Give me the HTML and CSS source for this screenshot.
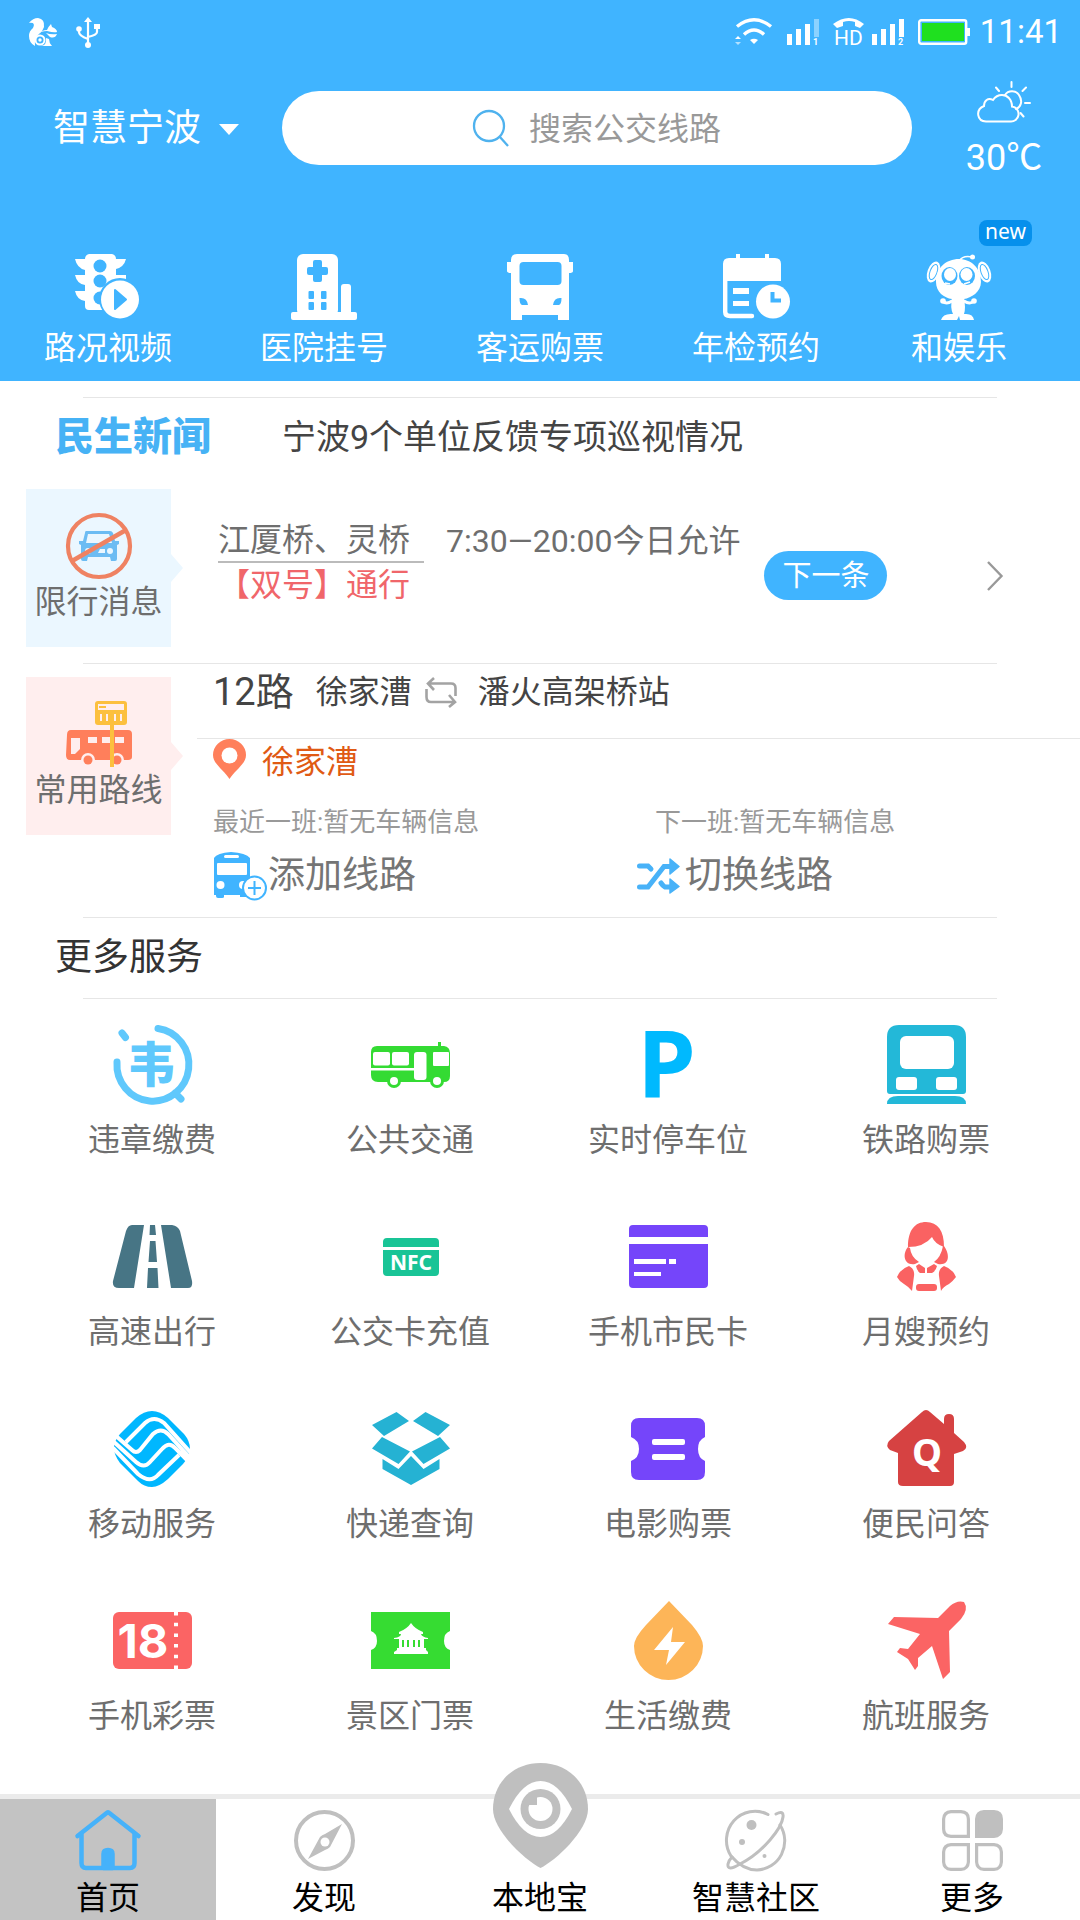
FILE: index.html
```html
<!DOCTYPE html>
<html lang="zh-CN">
<head>
    <meta charset="UTF-8">
    <meta name="viewport" content="width=device-width, initial-scale=1.0">
    <title>智慧宁波</title>
    <link rel="stylesheet" href="styles.css">
</head>
<body>
    <header class="header">
        <div class="status">
            <svg width="29" height="29" viewBox="0 0 29 29" fill="#fff">
                <path d="M0 5Q4 0 9 0Q16 1 15 9Q14 13 10 16Q5 20 6 28Q0 25 0 18Q0 13 4 10Q7 4 0 5z"/>
                <path d="M9 16Q13 12 18 12Q19 9 22 6L23 9Q28 11 28 14Q25 15 18 13Q12 13 9 16z"/>
                <path d="M17 15Q22 17 28 16Q26 21 21 19Q19 17 17 15zM17 20L20 21Q20 25 23 28H12Q18 27 17 20z"/>
                <circle cx="11" cy="22" r="4.500" fill="none" stroke="#fff" stroke-width="2"/>
                <circle cx="11" cy="22" r="1.700"/>
            </svg>
            <svg width="24" height="31" viewBox="0 0 24 31" fill="#fff">
                <path d="M12 4V27M3 12V15Q3 19 12 22M21 10V15Q21 18 12 20" fill="none" stroke="#fff" stroke-width="2.200"/>
                <path d="M8 5L12 0L16 5zM18 7H24V12H18z"/>
                <circle cx="3" cy="12" r="2.800"/>
                <circle cx="12" cy="28" r="3"/>
            </svg>
            <div class="status-right">
                <svg width="38" height="28" viewBox="0 0 38 28" fill="#fff">
                    <path d="M2 8.500Q19 -5 36 8.500M9 16.500Q19 7.500 29 16.500" fill="none" stroke="#fff" stroke-width="3.400"/>
                    <path d="M15 22Q19 19.500 23 22L19 26zM0 21L3 18L6 21z"/>
                    <path d="M0 24H6L3 27z" opacity=".6"/>
                </svg>
                <svg width="32" height="27" viewBox="0 0 32 27" fill="#fff">
                    <path d="M0 15H5V26H0zM9 10H14V26H9zM18 5H23V26H18z"/>
                    <path d="M27 0H32V18H27z" opacity=".4"/>
                    <text x="26" y="26" class="sim">1</text>
                </svg>
                <svg class="call" width="32" height="28" viewBox="0 0 32 28" fill="#fff">
                    <path d="M0 6Q16 -6 31 6L27 10L22 8V4Q16 2 10 4V8L4 10z"/>
                    <text x="1" y="27" class="hd">HD</text>
                </svg>
                <svg width="32" height="27" viewBox="0 0 32 27" fill="#fff">
                    <path d="M0 15H5V26H0zM9 10H14V26H9zM18 5H23V26H18zM27 0H32V18H27z"/>
                    <text x="26" y="26" class="sim">2</text>
                </svg>
                <svg width="52" height="26" viewBox="0 0 52 26">
                    <rect x="1.200" y="1.200" width="47" height="23.600" rx="2" fill="none" stroke="#fff" stroke-width="2.400"/>
                    <rect x="4" y="4" width="42" height="18" fill="#1fe01f"/>
                    <path d="M49 9H52V17H49z" fill="#fff"/>
                </svg>
                <span class="clock">11:41</span>
            </div>
        </div>

        <div class="topbar">
            <button class="city">智慧宁波
                <svg width="20" height="11" viewBox="0 0 20 11"><path d="M0 0H20L10 11z" fill="#fff"/></svg>
            </button>
            <label class="search">
                <svg width="36" height="38" viewBox="0 0 36 38" fill="none" stroke="#4fb2ee" stroke-width="2.300">
                    <circle cx="16" cy="17" r="15"/>
                    <path d="M26.500 27.500L35 37"/>
                </svg>
                <input type="text" placeholder="搜索公交线路" aria-label="搜索公交线路">
            </label>
            <a href="#" class="weather">
                <svg width="54" height="42" viewBox="0 0 54 42" fill="none" stroke="#fff" stroke-width="2" stroke-linecap="round">
                    <path d="M9 40.500H33A7.500 7.500 0 0 0 35 25.500C35 18 30 14 25 14C21 14 18 16 16 19C11 16 7 20 7 25C-2 29 0 40 9 40.500z"/>
                    <path d="M28 14C31 9 39 9 42 14C46 20 44 26 39 28M34.500 1V6M19 6.500L22 10M49 6.500L45.500 10M48 22H53M43.500 32L46.500 35.500"/>
                </svg>
                <span>30℃</span>
            </a>
        </div>

        <nav class="quick">
            <a href="#">
                <svg width="66" height="66" viewBox="0 0 66 66" fill="#fff">
                    <path d="M14 0H37Q41 1 41 5H51Q49 13 41 15V21H51V30L27 56H14Q10 56 10 52V47Q2 46 0 37H10V31Q2 30 0 21H10V16Q2 14 0 5H10Q10 1 14 0z"/>
                    <g fill="#40b4ff"><circle cx="25" cy="12" r="6.500"/><circle cx="25" cy="27" r="6.500"/><circle cx="25" cy="44" r="6.500"/><circle cx="45" cy="45" r="21"/></g>
                    <circle cx="45" cy="45.500" r="19"/>
                    <path d="M40 36L51 45.500L40 55z" fill="#40b4ff" stroke="#40b4ff" stroke-width="2" stroke-linejoin="round"/>
                </svg>
                路况视频
            </a>
            <a href="#">
                <svg width="66" height="66" viewBox="0 0 66 66" fill="#fff">
                    <rect x="6" width="41" height="62" rx="6"/>
                    <rect x="50" y="30" width="10" height="32" rx="3"/>
                    <rect y="58" width="66" height="8" rx="2"/>
                    <g fill="#40b4ff"><rect x="16" y="13" width="21" height="8" rx="2"/><rect x="22" y="6" width="9" height="22" rx="2"/><rect x="17.500" y="37" width="5.500" height="8" rx="1"/><rect x="30" y="37" width="5.500" height="8" rx="1"/><rect x="17.500" y="48" width="5.500" height="8" rx="1"/><rect x="30" y="48" width="5.500" height="8" rx="1"/></g>
                </svg>
                医院挂号
            </a>
            <a href="#">
                <svg width="66" height="66" viewBox="0 0 66 66" fill="#fff">
                    <path d="M10 0H57Q62 0 62 6V8H66V17Q66 19 62 19V66H51V61H15V66H4V19Q0 19 0 17V8H4V6Q4 0 10 0z"/>
                    <rect x="12.500" y="8" width="42" height="23" rx="4" fill="#40b4ff"/>
                    <path d="M12.500 44Q20 43 21 51H15Q12.500 50 12.500 44zM54.500 44Q47 43 46 51H52Q54.500 50 54.500 44z" fill="#40b4ff"/>
                </svg>
                客运购票
            </a>
            <a href="#">
                <svg width="67" height="66" viewBox="0 0 67 66" fill="#fff">
                    <path d="M0 27V10Q0 4 6 4H13V0H17V4H42V0H46V4H52Q58 4 58 10V27z"/>
                    <path d="M2.200 24V58Q2.200 62 7 62H29" fill="none" stroke="#fff" stroke-width="4.400" stroke-linecap="round"/>
                    <rect x="10" y="34" width="16" height="6"/>
                    <rect x="10" y="47" width="16" height="5"/>
                    <circle cx="50" cy="47.500" r="17"/>
                    <path d="M49.500 38V46.500H58" fill="none" stroke="#40b4ff" stroke-width="4"/>
                </svg>
                年检预约
            </a>
            <a href="#" class="quick-last">
                <svg width="66" height="66" viewBox="0 0 66 66" fill="#fff">
                    <path d="M33 7Q37 1 46 3" fill="none" stroke="#fff" stroke-width="1.500"/>
                    <circle cx="46.500" cy="3" r="2.500"/>
                    <ellipse cx="7.500" cy="18" rx="6" ry="11" transform="rotate(20 7.500 18)"/>
                    <ellipse cx="58.500" cy="18" rx="6" ry="11" transform="rotate(-20 58.500 18)"/>
                    <g fill="none" stroke="#40b4ff" stroke-width="1">
                        <ellipse cx="7.500" cy="18" rx="3.500" ry="8" transform="rotate(20 7.500 18)"/>
                        <ellipse cx="58.500" cy="18" rx="3.500" ry="8" transform="rotate(-20 58.500 18)"/>
                    </g>
                    <path d="M33 5C45 5 55 14 55 28C55 38 45 44 38 45Q40 54 38 60Q47 59 48 66H34L33 62L31 66H15Q17 59 27 60Q24 54 26 45C18 44 10 38 10 28C10 14 20 5 33 5z"/>
                    <path d="M26 47Q20 51 17 47M38 47Q44 51 48 47" fill="none" stroke="#fff" stroke-width="3" stroke-linecap="round"/>
                    <circle cx="17" cy="47" r="2.800"/><circle cx="48" cy="47" r="2.800"/>
                    <g fill="#40b4ff"><ellipse cx="23.500" cy="22" rx="8" ry="9"/><ellipse cx="41" cy="22" rx="8" ry="9"/></g>
                    <ellipse cx="24" cy="20.500" rx="6" ry="6.500"/><ellipse cx="40.500" cy="20.500" rx="6" ry="6.500"/>
                    <path d="M19 29L24 30M38 30L44 28" stroke="#fff" stroke-width="1.500"/>
                </svg>
                和娱乐
                <span class="badge">new</span>
            </a>
        </nav>
    </header>

    <main class="content">
        <section class="news">
            <h2>民生新闻</h2>
            <a href="#">宁波9个单位反馈专项巡视情况</a>
        </section>

        <section class="row">
            <div class="tag tag-blue">
                <svg width="66" height="66" viewBox="0 0 66 66">
                    <path d="M20 18H44Q46 18 47 20L49 28L53 28V31L51 32V46Q51 48 49 48H45L44 44H22L21 48H17Q15 48 15 46V32L13 31V28H17L19 20Q19 18 20 18z" fill="#6cbcf3"/>
                    <path d="M22 21H43L46 30H20z" fill="#ebf7ff"/>
                    <circle cx="44" cy="38" r="3" fill="#ebf7ff"/><circle cx="22" cy="38" r="3" fill="#ebf7ff"/>
                    <path d="M34 36H39V40H32z" fill="#ebf7ff"/>
                    <circle cx="33" cy="33" r="31" fill="none" stroke="#ef8262" stroke-width="4.200"/>
                    <path d="M6 48L60 17" stroke="#ef8262" stroke-width="4.500"/>
                </svg>
                限行消息
            </div>
            <div class="limit">
                <div class="limit-line">
                    <span class="limit-place">江厦桥、灵桥</span>
                    <span>7:30—20:00今日允许</span>
                </div>
                <div class="limit-rule">【双号】通行</div>
            </div>
            <button class="next">下一条</button>
            <a href="#" class="more" aria-label="查看详情">
                <svg width="16" height="30" viewBox="0 0 16 30" fill="none" stroke="#999" stroke-width="2.400"><path d="M1 1L14.500 15L1 29"/></svg>
            </a>
        </section>

        <section class="row">
            <div class="tag tag-pink">
                <svg width="66" height="66" viewBox="0 0 66 66">
                    <path d="M5 29H62Q66 29 66 33V56Q66 59 62 59H4Q0 59 0 54L1 34Q1 29 5 29z" fill="#ff7f5b"/>
                    <g fill="#ffeeee"><path d="M5 37H14V48L9 53H5z"/><rect x="22" y="36" width="9" height="6"/><rect x="36" y="36" width="8" height="6"/><rect x="49" y="36" width="9" height="6"/><circle cx="22" cy="59" r="7"/><circle cx="51" cy="59" r="7"/></g>
                    <circle cx="22" cy="59" r="4.500" fill="#ff7f5b"/><circle cx="51" cy="59" r="4.500" fill="#ff7f5b"/>
                    <rect x="29" width="32" height="24" rx="3" fill="#fcc03e"/>
                    <path d="M44 22H48V66H44z" fill="#fcc03e"/>
                    <path d="M32 3H58V9H32zM34 13H36V20H34zM40 13H42V20H40zM48 13H50V20H48zM54 13H56V20H54z" fill="#ffeeee"/>
                    <path d="M33 5H40V7H33z" fill="#fcc03e"/>
                </svg>
                常用路线
            </div>
            <div class="route">
                <h3 class="route-head">
                    <span class="route-no">12路</span>
                    <span>徐家漕</span>
                    <svg width="32" height="31" viewBox="0 0 32 31" fill="none" stroke="#a3a3a3" stroke-width="2.600"><path d="M3 6.500H26Q30.500 6.500 30.500 11V19M1.500 12V20Q1.500 25 6 25H29M9 1L3 6.500L9 13M24 18L30 25L24 30"/></svg>
                    <span>潘火高架桥站</span>
                </h3>
                <div class="station">
                    <svg width="33" height="40" viewBox="0 0 33 40"><path d="M16.500 40C11 31 0 25 0 16A16.500 16 0 0 1 33 16C33 25 22 31 16.500 40z" fill="#ff7f5b"/><circle cx="16.500" cy="16.500" r="8" fill="#fff"/></svg>
                    徐家漕
                </div>
                <div class="arrivals">
                    <span>最近一班:暂无车辆信息</span>
                    <span>下一班:暂无车辆信息</span>
                </div>
                <div class="actions">
                    <button>
                        <svg width="55" height="49" viewBox="0 0 55 49">
                            <path d="M1 6Q4 1 18 0Q33 1 37 6V43H34V45H27V43H11V45Q11 46 9 46H5Q3 46 3 44V43H1z" fill="#40b4ff"/>
                            <rect x="11" y="3" width="15" height="3" rx="1.500" fill="#fff"/>
                            <rect x="4" y="11" width="30" height="12" rx="1" fill="#fff"/>
                            <circle cx="7.500" cy="33" r="4" fill="#fff"/><circle cx="30" cy="33" r="4" fill="#fff"/>
                            <circle cx="41.500" cy="36" r="11.500" fill="#fff" stroke="#40b4ff" stroke-width="2"/>
                            <path d="M41.500 29V43M35 36H48" stroke="#40b4ff" stroke-width="2"/>
                        </svg>添加线路
                    </button>
                    <button>
                        <svg width="43" height="36" viewBox="0 0 43 36">
                            <path d="M2.500 8H11L14 11M2.500 29H11L27 8.500H35M24 25Q26 28 28 29H35" fill="none" stroke="#48b2f8" stroke-width="5" stroke-linecap="round"/>
                            <path d="M33 1L42 8.500L33 16zM33 21L42 28.500L33 35z" fill="#48b2f8" stroke="#48b2f8" stroke-width="1.500" stroke-linejoin="round"/>
                        </svg>
                        切换线路
                    </button>
                </div>
            </div>
        </section>

        <h2 class="title">更多服务</h2>

        <nav class="services">
            <a href="#">
                <svg viewBox="0 0 80 80" fill="none" stroke="#5fc8fc" stroke-width="7" stroke-linecap="round">
                    <path d="M46 4.500A36 36.500 0 1 1 5 38M10 9L13.500 13.500M63 69L69 75"/>
                    <text x="39" y="58" class="icon-wei">韦</text>
                </svg>
                违章缴费
            </a>
            <a href="#">
                <svg viewBox="0 0 80 80" fill="#34db33">
                    <path d="M7 22H68V18H71V22H74Q80 23 80 29V52Q80 58 74 58H8Q1 58 1 51V28Q1 22 7 22z"/>
                    <circle cx="24" cy="57" r="7"/><circle cx="67" cy="57" r="7"/>
                    <g fill="#fff"><rect x="3" y="28" width="17" height="13.500" rx="2"/><rect x="22" y="28" width="17" height="13.500" rx="2"/><rect x="44" y="28" width="12.500" height="28" rx="3"/><rect x="63" y="28" width="16" height="14" rx="1"/><rect x="1" y="44" width="43" height="2.500"/><circle cx="24" cy="57" r="4"/><circle cx="67" cy="57" r="4"/></g>
                </svg>
                公共交通
            </a>
            <a href="#">
                <svg viewBox="0 0 80 80"><text x="9" y="74" class="icon-p">P</text></svg>
                实时停车位
            </a>
            <a href="#">
                <svg viewBox="0 0 80 80" fill="#23b8d8">
                    <path d="M13 1H68Q80 1 80 13V67Q80 70 77 70H4Q1 70 1 67V13Q1 1 13 1zM1 80Q1 72 12 72H69Q80 72 80 80z"/>
                    <g fill="#fff"><rect x="14" y="12" width="54" height="33" rx="6"/><rect x="10" y="53" width="21" height="13" rx="3"/><rect x="50" y="53" width="21" height="13" rx="3"/></g>
                </svg>
                铁路购票
            </a>
            <a href="#">
                <svg viewBox="0 0 80 80" fill="#477585">
                    <path d="M20 9H32L22 72H7Q0 72 1 65L14 15Q16 9 20 9zM49 9H60Q66 10 68 15L80 65Q81 72 76 72H59z"/>
                    <path d="M38 9H43L44 19H37.500zM38 25H43.500L45 46H36.500zM36 52H45.500L46.500 72H35z"/>
                </svg>
                高速出行
            </a>
            <a href="#">
                <svg viewBox="0 0 80 80">
                    <path d="M13 31V26Q13 22 17 22H65Q69 22 69 26V31zM13 34H69V56Q69 60 65 60H17Q13 60 13 56z" fill="#19c496"/>
                    <text x="41" y="54" class="icon-nfc">NFC</text>
                </svg>
                公交卡充值
            </a>
            <a href="#">
                <svg viewBox="0 0 80 80">
                    <path d="M1 21V13Q1 9 5 9H76Q80 9 80 13V21zM1 28H80V68Q80 72 76 72H5Q1 72 1 68z" fill="#7545fa"/>
                    <path d="M6 43H38V48H6zM41 43H48V48H41zM6 56H33V60H6z" fill="#fff"/>
                </svg>
                手机市民卡
            </a>
            <a href="#">
                <svg viewBox="0 0 80 80" fill="#fa6262">
                    <path d="M22 31C22 14 29 6 40 6C52 6 58 15 58 31Q49 28 46 21Q38 31 22 31z"/>
                    <path d="M22 31C16 38 18 50 29 48L33 46Q25 41 24 32zM58 30C64 38 64 50 52 48L48 46Q55 41 57 30z"/>
                    <path d="M30 50L33 48L39 52V57H34Q31 55 30 50zM51 50L48 48L41 52V57H46Q50 55 51 50z"/>
                    <path d="M11 61Q14 53 23 50Q29 53 28 60L26 75Q23 71 18 68Q13 65 11 61zM70 61Q67 53 58 50Q52 53 53 60L55 75Q57 71 63 68Q67 65 70 61z"/>
                    <rect x="30" y="68" width="21" height="7" rx="3"/>
                </svg>
                月嫂预约
            </a>
            <a href="#">
                <svg viewBox="0 0 80 80">
                    <path d="M40 3Q48 3 56 10L72 26Q78 33 78 41Q78 48 71 56L56 71Q47 79 40 79Q32 79 26 73L8 55Q2 47 2 40Q2 33 8 26L24 10Q32 3 40 3z" fill="#00b7ff"/>
                    <path d="M14 34L33 15Q42 7 52 15L79 45M4 28L20 42Q24 46 28 42L41 26Q49 19 56 26L78 50M2 34L24 54Q32 61 38 54L50 41Q57 33 63 40L77 54M1 40L26 66Q38 76 46 67L67 47" fill="none" stroke="#fff" stroke-width="4"/>
                </svg>
                移动服务
            </a>
            <a href="#">
                <svg viewBox="0 0 80 80" fill="#25b2d3">
                    <path d="M26.500 4L39 13L14 28L2 17zM55.500 4L43 13L68 28L80 17zM12 29L40 43.500L28.500 56L2 40.500zM70 29L42 43.500L53.500 56L80 40.500z"/>
                    <path d="M12.500 51L28.500 61L41 48L53.500 61L69.500 51V61L41 77L12.500 61z"/>
                </svg>
                快递查询
            </a>
            <a href="#">
                <svg viewBox="0 0 80 80">
                    <path d="M11 10H69Q77 10 77 18V29Q70 32 70 41Q70 50 77 53V64Q77 72 69 72H11Q3 72 3 64V53Q11 50 11 41Q11 32 3 29V18Q3 10 11 10z" fill="#7545fa"/>
                    <rect x="24" y="31" width="33" height="6" rx="2" fill="#fff"/><rect x="24" y="46" width="33" height="6" rx="2" fill="#fff"/>
                </svg>
                电影购票
            </a>
            <a href="#">
                <svg viewBox="0 0 80 80">
                    <path d="M36 4Q40 0 44 4L58 16V11Q58 6 63 6Q68 6 68 11V25L78 34Q83 40 77 43L68 46V74Q68 78 64 78H17Q12 78 12 74V45L4 42Q-1 38 3 33z" fill="#d64242"/>
                    <text x="41" y="58" class="icon-q">Q</text>
                </svg>
                便民问答
            </a>
            <a href="#">
                <svg viewBox="0 0 80 80">
                    <rect x="1" y="12" width="79" height="57" rx="6" fill="#fb6464"/>
                    <text x="31" y="58" class="icon-18">18</text>
                    <path d="M64 12V69" stroke="#fff" stroke-width="4" stroke-dasharray="3.500 7.200"/>
                </svg>
                手机彩票
            </a>
            <a href="#">
                <svg viewBox="0 0 80 80">
                    <path d="M1 12H80V31Q74 33 74 41Q74 48 80 50V69H1V50Q7 48 7 41Q7 33 1 31z" fill="#36dc32"/>
                    <path d="M41 23Q45 29 53 32V34H51Q52 37 58 38V39H54V48H56V50L58 52V54H24V52L27 50V48H29V39H24V38Q31 37 31 34H29V32Q37 29 41 23z" fill="#fff"/>
                    <path d="M32 40H34V47H32zM37 40H39V47H37zM43 40H45V47H43zM48 40H50V47H48z" fill="#36dc32"/>
                </svg>
                景区门票
            </a>
            <a href="#">
                <svg viewBox="0 0 80 80">
                    <path d="M41 1L64 25Q75 38 75 46A34.500 34 0 0 1 6 46Q6 38 18 25z" fill="#fdb558"/>
                    <path d="M45 27L26 50H41L38 65L57 42H43z" fill="#fff"/>
                </svg>
                生活缴费
            </a>
            <a href="#">
                <svg viewBox="0 0 80 80">
                    <path d="M52 18L64 6Q71 0 78 2Q83 9 75 19L63 31L64 72L57 79L46 46L32 58V66L29 70L22 59L11 52L14 48L22 49L34 34L2 24L8 17z" fill="#fb6464"/>
                </svg>
                航班服务
            </a>
        </nav>
    </main>

    <nav class="tabbar">
        <a href="#" class="active">
            <svg width="66" height="61" viewBox="0 0 66 61" fill="none" stroke="#46b2fa" stroke-width="4.500" stroke-linecap="round" stroke-linejoin="round">
                <path d="M2.500 26L31 3.500Q33 1.500 35 3.500L63.500 26M6.500 24V53Q6.500 58 11 58H55Q59.500 58 59.500 53V24"/>
                <path d="M28.500 58V44Q28.500 40 33 40Q37.500 40 37.500 44V58z" fill="#46b2fa"/>
            </svg>
            首页
        </a>
        <a href="#">
            <svg width="61" height="61" viewBox="0 0 61 61">
                <circle cx="30.500" cy="30.500" r="28.500" fill="none" stroke="#bfbfbf" stroke-width="4"/>
                <path d="M48 14L36 37Q34 39 31 40L14 49L26 27Q28 25 31 24z" fill="#bfbfbf"/>
                <circle cx="31" cy="32" r="4.500" fill="#fff"/>
            </svg>
            发现
        </a>
        <a href="#" class="tab-center">
            <svg width="95" height="105" viewBox="0 0 95 105">
                <path d="M47.500 105C33 98 0 68 0 46C0 20 20 0 47.500 0S95 20 95 46C95 68 62 98 47.500 105z" fill="#bfbfbf"/>
                <path d="M16 46Q30 18 47.500 18T79 46Q65 74 47.500 74T16 46z" fill="#fff"/>
                <circle cx="47.500" cy="46" r="20" fill="#bfbfbf"/>
                <circle cx="47.500" cy="46" r="12" fill="#fff"/>
                <path d="M34 33H44V42H34z" fill="#bfbfbf"/>
            </svg>
            本地宝
        </a>
        <a href="#">
            <svg width="61" height="61" viewBox="0 0 61 61" fill="none" stroke="#bfbfbf" stroke-width="3" stroke-linecap="round">
                <path d="M42 4.500A28.500 29 0 0 0 5 46Q17 60 31 60A28.500 29 0 0 0 54 15"/>
                <path d="M50 4Q58 0 57 7Q56 16 44 30Q30 46 14 54Q1 62 2 54Q3 50 6 47"/>
                <g fill="#bfbfbf" stroke="none"><circle cx="25.500" cy="15" r="5"/><circle cx="16" cy="32" r="3"/><circle cx="38.500" cy="46" r="2"/></g>
            </svg>
            智慧社区
        </a>
        <a href="#">
            <svg width="61" height="61" viewBox="0 0 61 61" fill="none" stroke="#bfbfbf" stroke-width="3.200">
                <path d="M9 1.600H19Q26.400 2 26.400 9V26.400H9Q1.600 26 1.600 19V9Q2 2 9 1.600z"/>
                <path d="M42 1.600H52Q59.400 2 59.400 9V19Q59 26 52 26.400H34.600V9Q35 2 42 1.600z" fill="#bfbfbf"/>
                <path d="M9 34.600H26.400V52Q26 59 19 59.400H9Q2 59 1.600 52V42Q2 35 9 34.600z"/>
                <path d="M34.600 34.600H52Q59 35 59.400 42V52Q59 59 52 59.400H42Q35 59 34.600 52z"/>
            </svg>
            更多
        </a>
    </nav>
</body>
</html>
```
FILE: styles.css
```css
* {
    box-sizing: border-box;
}

body {
    margin: 0;
    min-height: 100vh;
    display: flex;
    flex-direction: column;
    background: #fff;
    color: #6e6e6e;
    font-family: Roboto, "Noto Sans CJK SC", sans-serif;
    font-size: 32px;
    line-height: 46px;
}

a {
    color: inherit;
    text-decoration: none;
}

button, input {
    margin: 0;
    padding: 0;
    border: none;
    background: none;
    color: inherit;
    font: inherit;
}

button {
    cursor: pointer;
}

h2, h3 {
    margin: 0;
    font-size: 32px;
    font-weight: normal;
}

svg {
    display: block;
    flex: none;
    overflow: visible;
}

/* header */

.header {
    background: #40b4ff;
    color: #fff;
}

.status {
    display: flex;
    align-items: center;
    gap: 18px;
    height: 64px;
    padding: 0 18px 0 29px;
}

.status-right {
    display: flex;
    align-items: center;
    gap: 14px;
    margin-left: auto;
}

.call {
    margin-right: -7px;
}

.clock {
    margin-left: -4px;
    font-size: 33px;
}

.sim {
    font-size: 9px;
    font-weight: bold;
}

.hd {
    font-size: 21px;
}

.topbar {
    display: flex;
    align-items: center;
    height: 128px;
}

.city {
    display: flex;
    align-items: center;
    gap: 18px;
    width: 282px;
    padding: 2px 0 0 53px;
    font-size: 37px;
}

.search {
    flex: 1;
    display: flex;
    align-items: center;
    justify-content: center;
    gap: 20px;
    height: 74px;
    border-radius: 37px;
    background: #fff;
}

.search input {
    width: 192px;
    padding-top: 2px;
    color: #444;
    outline: none;
}

.search input::placeholder {
    color: #999;
    opacity: 1;
}

.weather {
    display: flex;
    flex-direction: column;
    align-items: center;
    gap: 12px;
    width: 152px;
    margin-left: 16px;
    padding-top: 6px;
    font-size: 36px;
}

.quick {
    display: grid;
    grid-template-columns: repeat(5, 1fr);
    padding: 62px 0 10px;
}

.quick a {
    position: relative;
    display: flex;
    flex-direction: column;
    align-items: center;
    gap: 5px;
}

.quick .quick-last {
    padding-right: 26px;
}

.badge {
    position: absolute;
    top: -34px;
    right: 48px;
    padding: 0 6px 3px;
    border-radius: 8px;
    background: #0690ec;
    font-family: "Noto Sans", sans-serif;
    font-size: 21px;
    line-height: 23px;
}

/* content */

.content {
    flex: 1;
    padding-top: 16px;
}

.news::before, .row::after, .title::after {
    content: "";
    display: block;
    height: 1px;
    margin: 0 83px;
    background: #e6e6e6;
}

.news {
    display: flex;
    flex-wrap: wrap;
    align-items: center;
    column-gap: 71px;
    padding-left: 55px;
    color: #444;
    font-size: 34px;
    line-height: 78px;
}

.news::before {
    width: 100%;
    margin: 0 83px 0 28px;
}

.news h2 {
    color: #46b2f5;
    font-size: 39px;
    font-weight: 900;
}

.row {
    display: flex;
    flex-wrap: wrap;
    align-items: flex-start;
}

.row::after {
    flex: 0 0 calc(100% - 166px);
}

.tag {
    position: relative;
    display: flex;
    flex-direction: column;
    align-items: center;
    width: 145px;
    height: 158px;
    margin: 13px 0 16px 26px;
    padding-top: 24px;
}

.tag::after {
    content: "";
    position: absolute;
    top: 65px;
    left: 100%;
    border: 14px solid transparent;
    border-left: 12px solid;
    border-right: none;
}

.tag-blue {
    background: #ebf7ff;
}

.tag-blue::after {
    border-left-color: #ebf7ff;
}

.tag-pink {
    background: #ffeeee;
}

.tag-pink::after {
    border-left-color: #ffeeee;
}

.limit {
    margin: 43px 24px 0 47px;
    line-height: 44px;
}

.limit-line {
    display: flex;
    gap: 22px;
}

.limit-place {
    padding-right: 14px;
    border-bottom: 2px solid #bbb;
    line-height: 42px;
}

.limit-rule {
    color: #f0666a;
}

.next {
    width: 123px;
    height: 49px;
    margin-top: 75px;
    border-radius: 25px;
    background: #40b4ff;
    color: #fff;
    font-size: 29px;
}

.more {
    margin: 85px 77px 0 auto;
}

.route {
    flex: 1;
    margin-left: 26px;
    padding-bottom: 8px;
}

.route-head {
    display: flex;
    align-items: center;
    height: 75px;
    padding: 0 0 18px 16px;
    border-bottom: 1px solid #e6e6e6;
    color: #444;
}

.route-no {
    margin-right: 22px;
    font-size: 38px;
}

.route-head svg {
    margin: 0 21px 0 13px;
}

.station {
    display: flex;
    gap: 16px;
    height: 44px;
    margin-bottom: 18px;
    padding-left: 16px;
    color: #e05a14;
}

.arrivals, .actions {
    display: grid;
    grid-template-columns: 442px 1fr;
    padding-left: 16px;
}

.arrivals {
    color: #999;
    font-size: 26px;
    line-height: 42px;
}

.actions {
    grid-template-columns: 424px 1fr;
}

.actions button {
    display: flex;
    align-items: center;
    height: 66px;
    color: #757575;
    font-size: 37px;
}

.actions button + button {
    gap: 5px;
}

.title {
    color: #333;
    font-size: 37px;
    line-height: 80px;
    text-indent: 55px;
}

.services {
    display: grid;
    grid-template-columns: repeat(4, 1fr);
    row-gap: 53px;
    padding: 25px 25px 25px 23px;
}

.services a {
    display: flex;
    flex-direction: column;
    align-items: center;
    gap: 13px;
}

.services svg {
    width: 80px;
    height: 80px;
}

.icon-wei {
    fill: #5fc8fc;
    stroke: none;
    font-size: 48px;
    font-weight: 900;
    text-anchor: middle;
}

.icon-p {
    fill: #00b9fe;
    font-family: "Open Sans", sans-serif;
    font-size: 94px;
    font-weight: bold;
}

.icon-nfc {
    fill: #fff;
    font-family: "Noto Sans", sans-serif;
    font-size: 21px;
    font-weight: bold;
    text-anchor: middle;
}

.icon-q {
    fill: #fff;
    font-family: "Noto Sans", sans-serif;
    font-size: 38px;
    font-weight: bold;
    text-anchor: middle;
}

.icon-18 {
    fill: #fff;
    font-family: Inter, sans-serif;
    font-size: 47px;
    font-weight: bold;
    text-anchor: middle;
}

/* bottom tabs */

.tabbar {
    display: grid;
    grid-template-columns: repeat(5, 1fr);
    border-top: 5px solid #ebebeb;
    color: #000;
}

.tabbar a {
    display: flex;
    flex-direction: column;
    align-items: center;
    gap: 5px;
    padding-top: 11px;
    line-height: 44px;
}

.tabbar .active {
    background: #c3c3c3;
}

.tabbar .tab-center {
    gap: 8px;
    margin-top: -47px;
}
```
